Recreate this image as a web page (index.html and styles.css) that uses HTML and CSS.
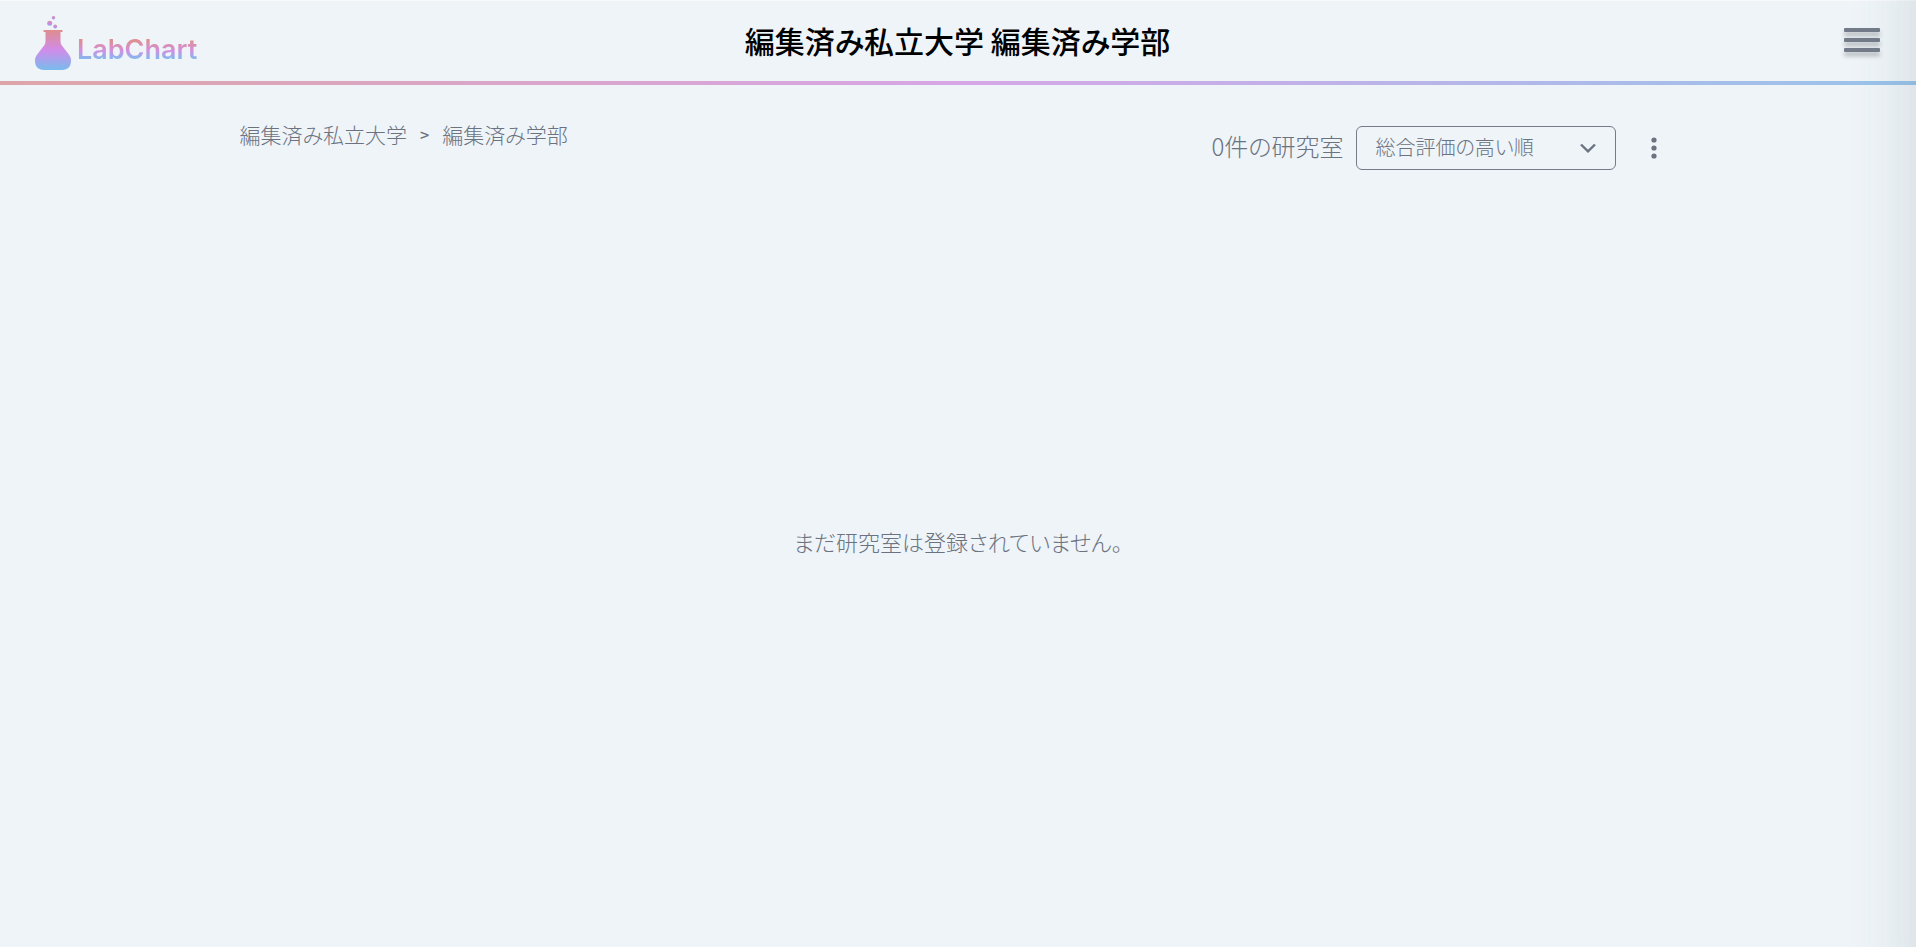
FILE: index.html
```
<!DOCTYPE html>
<html lang="ja">
<head>
  <meta charset="UTF-8">
  <meta name="viewport" content="width=device-width, initial-scale=1.0">
  <title>LabChart - 編集済み学部</title>
  <link rel="stylesheet" href="styles.css">
</head>
<body>
  <header class="header">
    <a class="logo" href="#">
      <svg class="logo-icon" viewBox="0 0 36 54" aria-hidden="true">
        <defs>
          <linearGradient id="flask" gradientUnits="userSpaceOnUse" x1="0" y1="14" x2="0" y2="54">
            <stop offset="0" stop-color="#e08c8c"/>
            <stop offset="0.5" stop-color="#d08cea"/>
            <stop offset="1" stop-color="#78bcec"/>
          </linearGradient>
          <linearGradient id="bubble" x1="0" y1="0" x2="0" y2="1">
            <stop offset="0" stop-color="#dc8fa6"/>
            <stop offset="0.5" stop-color="#cc8cdc"/>
            <stop offset="1" stop-color="#94a4e8"/>
          </linearGradient>
        </defs>
        <circle cx="18.500" cy="1.800" r="1.800" fill="url(#bubble)"/>
        <circle cx="14.700" cy="7.300" r="2.500" fill="url(#bubble)"/>
        <circle cx="20.200" cy="10.500" r="1.900" fill="url(#bubble)"/>
        <path d="M9.500 14h17.500q.5 0 .5.500v1q0 .5-.5.500h-1.500v9.500q0 2 1.200 3.700l7.500 9.800q1.800 2.500 1.800 5.500c0 6-3 9.500-9 9.500h-18c-6 0-9-3.500-9-9.500q0-3 1.800-5.500l7.500-9.800q1.200-1.700 1.200-3.700V16h-1.500q-.5 0-.5-.5v-1q0-.5.5-.5z" fill="url(#flask)"/>
      </svg>
      <span class="logo-text">LabChart</span>
    </a>
    <h1 class="title">編集済み私立大学 編集済み学部</h1>
    <button class="hamburger" type="button" aria-label="メニュー">
      <span></span>
      <span></span>
      <span></span>
    </button>
  </header>

  <main class="main">
    <div class="toolbar">
      <nav class="breadcrumb" aria-label="パンくずリスト">
        <a href="#">編集済み私立大学</a>
        <span class="separator">&gt;</span>
        <a href="#">編集済み学部</a>
      </nav>
      <div class="controls">
        <label class="count" for="sort">0件の研究室</label>
        <div class="select-box">
          <select id="sort">
            <option>総合評価の高い順</option>
          </select>
          <svg class="chevron" viewBox="0 0 16 10" aria-hidden="true">
            <path d="M1 1.500 8 8.300l7-6.800" fill="none" stroke="currentColor" stroke-width="2.400"/>
          </svg>
        </div>
        <button class="more" type="button" aria-label="その他">
          <svg viewBox="0 0 6 22" aria-hidden="true">
            <circle cx="3" cy="3" r="2.600"/>
            <circle cx="3" cy="11" r="2.600"/>
            <circle cx="3" cy="19" r="2.600"/>
          </svg>
        </button>
      </div>
    </div>
    <p class="empty">まだ研究室は登録されていません。</p>
  </main>

  <div class="drawer"></div>
</body>
</html>
```
FILE: styles.css
```
* {
  box-sizing: border-box;
}
body {
  margin: 0;
  min-height: 100vh;
  display: flex;
  flex-direction: column;
  background: #eef4f8;
  color: #6b7280;
  font-family: "Noto Sans CJK JP", sans-serif;
  font-weight: 300;
  font-feature-settings: "palt";
}
a {
  color: inherit;
  text-decoration: none;
}
button {
  padding: 0;
  border: none;
  background: none;
  color: inherit;
  cursor: pointer;
}

/* header */
.header {
  display: grid;
  grid-template-columns: 1fr auto 1fr;
  align-items: center;
  height: 85px;
  padding: 0 36px 2px 35px;
  border-bottom: 4px solid;
  border-image: linear-gradient(to right, #dea5a8, #d6a6e6 50%, #98c4ea) 1;
  box-shadow: inset 0 1px 0 #f8fafc;
}
.logo {
  display: flex;
  align-items: flex-end;
  gap: 6px;
  justify-self: start;
  padding-top: 6px;
}
.logo-icon {
  width: 36px;
  height: 54px;
}
.logo-text {
  padding-bottom: 2px;
  font-family: Inter, sans-serif;
  font-size: 27px;
  font-weight: 600;
  line-height: 36px;
  color: transparent;
  background: linear-gradient(to bottom, #de8f94 24%, #d090e4 50%, #7cbcee 72%);
  -webkit-background-clip: text;
  background-clip: text;
}
.title {
  margin: 0;
  color: #000;
  font-size: 30px;
  font-weight: 500;
  line-height: 44px;
}
.hamburger {
  display: flex;
  flex-direction: column;
  gap: 6px;
  justify-self: end;
  width: 36px;
}
.hamburger span {
  height: 4px;
  border-radius: 1px;
  background: #747b89;
  box-shadow: 0 4px 4px rgba(0, 0, 0, 0.25);
}

/* main */
.main {
  flex: 1;
  display: flex;
  flex-direction: column;
  width: 75%;
  margin: 0 auto;
}
.toolbar {
  display: flex;
  justify-content: space-between;
  align-items: flex-start;
  padding-top: 34px;
}
.breadcrumb {
  display: flex;
  gap: 13px;
  font-size: 21px;
  line-height: 30px;
}
.separator {
  font-size: 16px;
  font-weight: 500;
}
.controls {
  display: flex;
  align-items: center;
  padding-top: 7px;
}
.count {
  margin-right: 12px;
  font-size: 24px;
  line-height: 40px;
  padding-bottom: 4px;
}
.select-box {
  position: relative;
}
.select-box select {
  width: 260px;
  height: 44px;
  padding: 0 48px 3px 19px;
  border: 1px solid #747b89;
  border-radius: 6px;
  appearance: none;
  background: transparent;
  color: inherit;
  font: inherit;
  font-size: 20px;
  font-feature-settings: inherit;
}
.chevron {
  position: absolute;
  top: 17px;
  right: 20px;
  width: 16px;
  height: 10px;
  pointer-events: none;
}
.more {
  display: flex;
  justify-content: center;
  align-items: center;
  width: 44px;
  height: 44px;
  margin: 0 1px 0 16px;
}
.more svg {
  width: 6px;
  height: 22px;
  fill: currentColor;
}
.empty {
  margin: 353px 0 0;
  font-size: 22px;
  line-height: 36px;
  text-align: center;
}

/* closed menu, only its shadow reaches the page */
.drawer {
  position: fixed;
  top: -60px;
  bottom: -60px;
  left: 100%;
  width: 300px;
  box-shadow: 0 0 60px rgba(70, 90, 90, 0.18);
}
```
